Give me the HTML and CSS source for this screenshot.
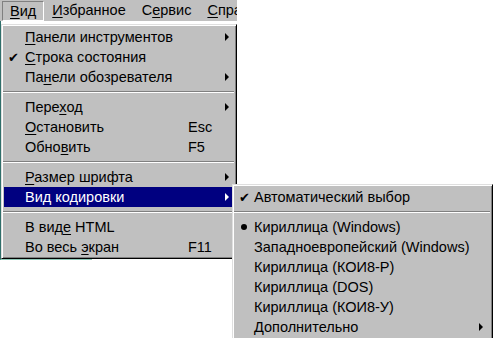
FILE: index.html
```html
<!DOCTYPE html>
<html lang="ru">
<head>
    <meta charset="UTF-8">
    <title>Вид - Кодировка</title>
    <link rel="stylesheet" href="styles.css">
</head>
<body>
    <div class="screen">
        <div class="menubar">
            <span class="bar-item pressed"><u>В</u>ид</span>
            <span class="bar-item"><u>И</u>збранное</span>
            <span class="bar-item">С<u>е</u>рвис</span>
            <span class="bar-item last"><u>С</u>пра</span>
        </div>

        <div class="window-edge"></div>

        <!-- main dropdown -->
        <div class="menu main-menu">
            <div class="item"><span class="mark"></span><span class="label"><u>П</u>анели инструментов</span><span class="key"></span><span class="arrow"></span></div>
            <div class="item"><span class="mark">&#10004;</span><span class="label"><u>С</u>трока состояния</span><span class="key"></span><span class="no-arrow"></span></div>
            <div class="item"><span class="mark"></span><span class="label">Па<u>н</u>ели обозревателя</span><span class="key"></span><span class="arrow"></span></div>
            <div class="sep"></div>
            <div class="item"><span class="mark"></span><span class="label">Пере<u>х</u>од</span><span class="key"></span><span class="arrow"></span></div>
            <div class="item"><span class="mark"></span><span class="label"><u>О</u>становить</span><span class="key">Esc</span><span class="no-arrow"></span></div>
            <div class="item"><span class="mark"></span><span class="label">Обно<u>в</u>ить</span><span class="key">F5</span><span class="no-arrow"></span></div>
            <div class="sep"></div>
            <div class="item"><span class="mark"></span><span class="label"><u>Р</u>азмер шрифта</span><span class="key"></span><span class="arrow"></span></div>
            <div class="item active"><span class="mark"></span><span class="label">Вид ко<u>д</u>ировки</span><span class="key"></span><span class="arrow"></span></div>
            <div class="sep"></div>
            <div class="item"><span class="mark"></span><span class="label">В вид<u>е</u> HTML</span><span class="key"></span><span class="no-arrow"></span></div>
            <div class="item"><span class="mark"></span><span class="label">Во весь <u>э</u>кран</span><span class="key">F11</span><span class="no-arrow"></span></div>
        </div>

        <!-- encoding submenu -->
        <div class="menu sub-menu">
            <div class="item"><span class="mark">&#10004;</span><span class="label">Автоматический выбор</span><span class="no-arrow"></span></div>
            <div class="sep"></div>
            <div class="item"><span class="mark"><span class="dot"></span></span><span class="label">Кириллица (Windows)</span><span class="no-arrow"></span></div>
            <div class="item"><span class="mark"></span><span class="label">Западноевропейский (Windows)</span><span class="no-arrow"></span></div>
            <div class="item"><span class="mark"></span><span class="label">Кириллица (КОИ8-Р)</span><span class="no-arrow"></span></div>
            <div class="item"><span class="mark"></span><span class="label">Кириллица (DOS)</span><span class="no-arrow"></span></div>
            <div class="item"><span class="mark"></span><span class="label">Кириллица (КОИ8-У)</span><span class="no-arrow"></span></div>
            <div class="item"><span class="mark"></span><span class="label"><u>Д</u>ополнительно</span><span class="arrow"></span></div>
        </div>
    </div>
</body>
</html>
```

FILE: styles.css
```css
body {
    margin: 0;
    background-color: #ffffff;
    font-family: "Liberation Sans", Arial, sans-serif;
    font-size: 14.5px;
    color: #000000;
}

.screen {
    position: relative;
    width: 493px;
    height: 338px;
    overflow: hidden;
}

u {
    text-decoration: underline;
    text-underline-offset: 2px;
}

/* menu bar */
.menubar {
    display: flex;
    width: 237px;
    height: 21px;
    padding-left: 2px;
    box-sizing: border-box;
    background-color: #c0c0c0;
    white-space: nowrap;
    overflow: hidden;
}

.bar-item {
    display: flex;
    align-items: center;
    padding: 0 7px;
    height: 20px;
    border: 1px solid transparent;
    box-sizing: border-box;
}

.bar-item.pressed {
    margin-top: 1px;
    border-color: #808080 #ffffff #ffffff #808080;
}

.bar-item.last {
    padding-right: 0;
}

/* bit of the window behind the menus */
.window-edge {
    position: absolute;
    left: 0;
    top: 21px;
    width: 92px;
    height: 239px;
    border-left: 1px solid #2f6f6a;
    border-bottom: 1px solid #8fc9b8;
    box-sizing: border-box;
}

/* popup menus */
.menu {
    position: absolute;
    background-color: #c0c0c0;
    border: 1px solid;
    border-color: #dfdfdf #000000 #000000 #dfdfdf;
    box-shadow: inset 1px 1px #ffffff, inset -1px -1px #808080;
    padding: 2px 3px 1px 2px;
    box-sizing: border-box;
}

.main-menu {
    left: 1px;
    top: 24px;
    width: 236px;
}

.sub-menu {
    left: 232px;
    top: 184px;
    width: 261px;
    padding-bottom: 4px;
}

.item {
    display: flex;
    align-items: center;
    height: 20px;
    white-space: nowrap;
}

.item.active {
    background-color: #000080;
    color: #ffffff;
}

.mark {
    width: 21px;
    flex: none;
    display: flex;
    justify-content: center;
    font-size: 13px;
    padding-right: 3px;
    box-sizing: border-box;
}

.main-menu .label {
    width: 163px;
}

.sub-menu .mark {
    width: 19px;
    padding-right: 1px;
}

.sub-menu .label {
    flex: 1;
}

.key {
    flex: 1;
}

.arrow,
.no-arrow {
    width: 4px;
    height: 7px;
    margin-right: 4px;
    flex: none;
}

.arrow {
    width: 0;
    height: 0;
    border-top: 4px solid transparent;
    border-bottom: 4px solid transparent;
    border-left: 4px solid currentColor;
}

.sub-menu .arrow,
.sub-menu .no-arrow {
    margin-right: 6px;
}

.dot {
    width: 6px;
    height: 6px;
    border-radius: 50%;
    background-color: #000000;
}

.sep {
    height: 10px;
    display: flex;
    align-items: center;
    margin: 0 -1px;
}

.sep::before {
    content: "";
    flex: 1;
    border-top: 1px solid #808080;
    border-bottom: 1px solid #ffffff;
}
```
